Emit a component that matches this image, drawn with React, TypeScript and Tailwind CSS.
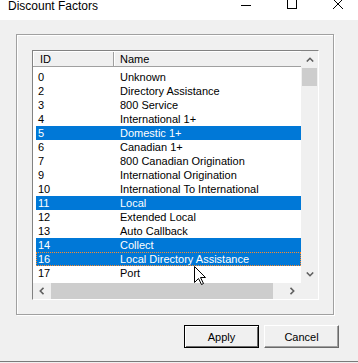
import React from "react";

type Row = { id: string; name: string; selected?: boolean; focused?: boolean };

const rows: Row[] = [
  { id: "0", name: "Unknown" },
  { id: "2", name: "Directory Assistance" },
  { id: "3", name: "800 Service" },
  { id: "4", name: "International 1+" },
  { id: "5", name: "Domestic 1+", selected: true },
  { id: "6", name: "Canadian 1+" },
  { id: "7", name: "800 Canadian Origination" },
  { id: "9", name: "International Origination" },
  { id: "10", name: "International To International" },
  { id: "11", name: "Local", selected: true },
  { id: "12", name: "Extended Local" },
  { id: "13", name: "Auto Callback" },
  { id: "14", name: "Collect", selected: true },
  { id: "16", name: "Local Directory Assistance", selected: true, focused: true },
  { id: "17", name: "Port" },
];

function Chevron({ dir }: { dir: "up" | "down" | "left" | "right" }) {
  const vertical = dir === "up" || dir === "down";
  const pts = {
    up: "0.8,4.5 4,1.3 7.2,4.5",
    down: "0.8,0.5 4,3.7 7.2,0.5",
    left: "4.5,0.8 1.3,4 4.5,7.2",
    right: "0.5,0.8 3.7,4 0.5,7.2",
  }[dir];
  return (
    <svg
      width={vertical ? 8 : 5}
      height={vertical ? 5 : 8}
      viewBox={vertical ? "0 0 8 5" : "0 0 5 8"}
    >
      <polyline points={pts} fill="none" stroke="#606060" strokeWidth="1.6" />
    </svg>
  );
}

export default function App() {
  return (
    <div className="relative flex h-[363px] w-[358px] flex-col overflow-hidden bg-[#f0f0f0] font-['Liberation_Sans',Arial,sans-serif] text-[11px] text-black">
      {/* title bar */}
      <div className="flex h-[20px] shrink-0 items-start bg-white">
        <span className="ml-[8px] text-[12px] leading-[12px] text-black">Discount Factors</span>
        <div className="ml-auto mr-[15px] flex gap-[36px]">
          <svg width="10" height="10" viewBox="0 0 10 10">
            <line x1="0" y1="5.5" x2="10" y2="5.5" stroke="#000" strokeWidth="1" />
          </svg>
          <svg width="10" height="10" viewBox="0 0 10 10" className="-mt-[1px]">
            <rect x="0.5" y="0.5" width="9" height="9" fill="none" stroke="#000" strokeWidth="1" />
          </svg>
          <svg width="10" height="10" viewBox="0 0 10 10" className="-mt-[1px]">
            <line x1="0" y1="0" x2="10" y2="10" stroke="#000" strokeWidth="1" />
            <line x1="10" y1="0" x2="0" y2="10" stroke="#000" strokeWidth="1" />
          </svg>
        </div>
      </div>

      {/* group box */}
      <div className="ml-[16px] mt-[14px] h-[281px] w-[318px] shrink-0 border border-[#a0a0a0] p-[15px] shadow-[inset_1px_1px_0_#fff,1px_1px_0_#fff]">
        {/* list view */}
        <div className="flex h-[250px] w-[287px] flex-col border-b border-l border-r border-t border-b-white border-l-[#828282] border-r-white border-t-[#828282]">
          <div className="flex h-[232px]">
            <div className="flex w-[268px] flex-col bg-white">
              <div className="flex h-[16px] border-b border-t border-b-[#a0a0a0] border-t-white bg-[#f0f0f0] leading-[14px]">
                <div className="w-[81px] border-l border-r border-l-white border-r-[#a0a0a0] pl-[6px]">ID</div>
                <div className="flex-1 border-l border-l-white pl-[5px]">Name</div>
              </div>
              <div className="mt-[3px] flex flex-col">
                {rows.map((r) => (
                  <div
                    key={r.id}
                    className={`relative ml-[3px] flex h-[14px] w-[265px] leading-[14px] ${
                      r.selected ? "bg-[#0078d7] text-white" : "text-black"
                    }`}
                  >
                    <div className="w-[84px] pl-[2px]">{r.id}</div>
                    <div className="flex-1 whitespace-nowrap">{r.name}</div>
                    {r.focused && (
                      <div className="pointer-events-none absolute inset-0 border border-dotted border-[#ff8a28]" />
                    )}
                  </div>
                ))}
              </div>
            </div>
            {/* vertical scrollbar */}
            <div className="flex w-[17px] flex-col bg-[#f0f0f0]">
              <div className="flex h-[17px] items-center justify-center">
                <Chevron dir="up" />
              </div>
              <div className="ml-[1px] h-[18px] w-[15px] bg-[#cdcdcd]" />
              <div className="mt-auto flex h-[17px] items-center justify-center">
                <Chevron dir="down" />
              </div>
            </div>
          </div>
          {/* horizontal scrollbar */}
          <div className="flex h-[16px]">
            <div className="flex w-[268px] bg-[#f0f0f0]">
              <div className="flex w-[17px] items-center justify-center">
                <Chevron dir="left" />
              </div>
              <div className="ml-[1px] w-[222px] bg-[#cdcdcd]" />
              <div className="ml-auto flex w-[17px] items-center justify-center">
                <Chevron dir="right" />
              </div>
            </div>
            <div className="w-[17px] bg-[#f0f0f0]" />
          </div>
        </div>
      </div>

      {/* buttons */}
      <div className="mr-[19px] mt-[10px] flex shrink-0 justify-end gap-[5px]">
        <button className="flex h-[23px] w-[75px] items-center justify-center border border-black bg-[#f0f0f0] leading-[14px] shadow-[inset_1px_1px_0_#fff,inset_-1px_-1px_0_#696969]">
          Apply
        </button>
        <button className="flex h-[23px] w-[75px] items-center justify-center border border-b-[#696969] border-l-white border-r-[#696969] border-t-white bg-[#f0f0f0] leading-[14px] shadow-[inset_-1px_-1px_0_#a0a0a0]">
          Cancel
        </button>
      </div>

      <div className="flex-1" />
      <div className="h-[1px] shrink-0 bg-[#7a7a7a]" />
      <div className="h-[1px] shrink-0" />

      {/* mouse cursor */}
      <svg
        width="13"
        height="20"
        viewBox="0 0 13 20"
        className="pointer-events-none absolute left-[194px] top-[266px]"
      >
        <polygon
          points="0.5,0.5 0.5,16.5 4.5,12.5 7.5,18.5 9.5,17.5 6.5,11.5 11.5,11.5"
          fill="#fff"
          stroke="#000"
          strokeWidth="1"
          strokeLinejoin="miter"
        />
      </svg>
    </div>
  );
}
